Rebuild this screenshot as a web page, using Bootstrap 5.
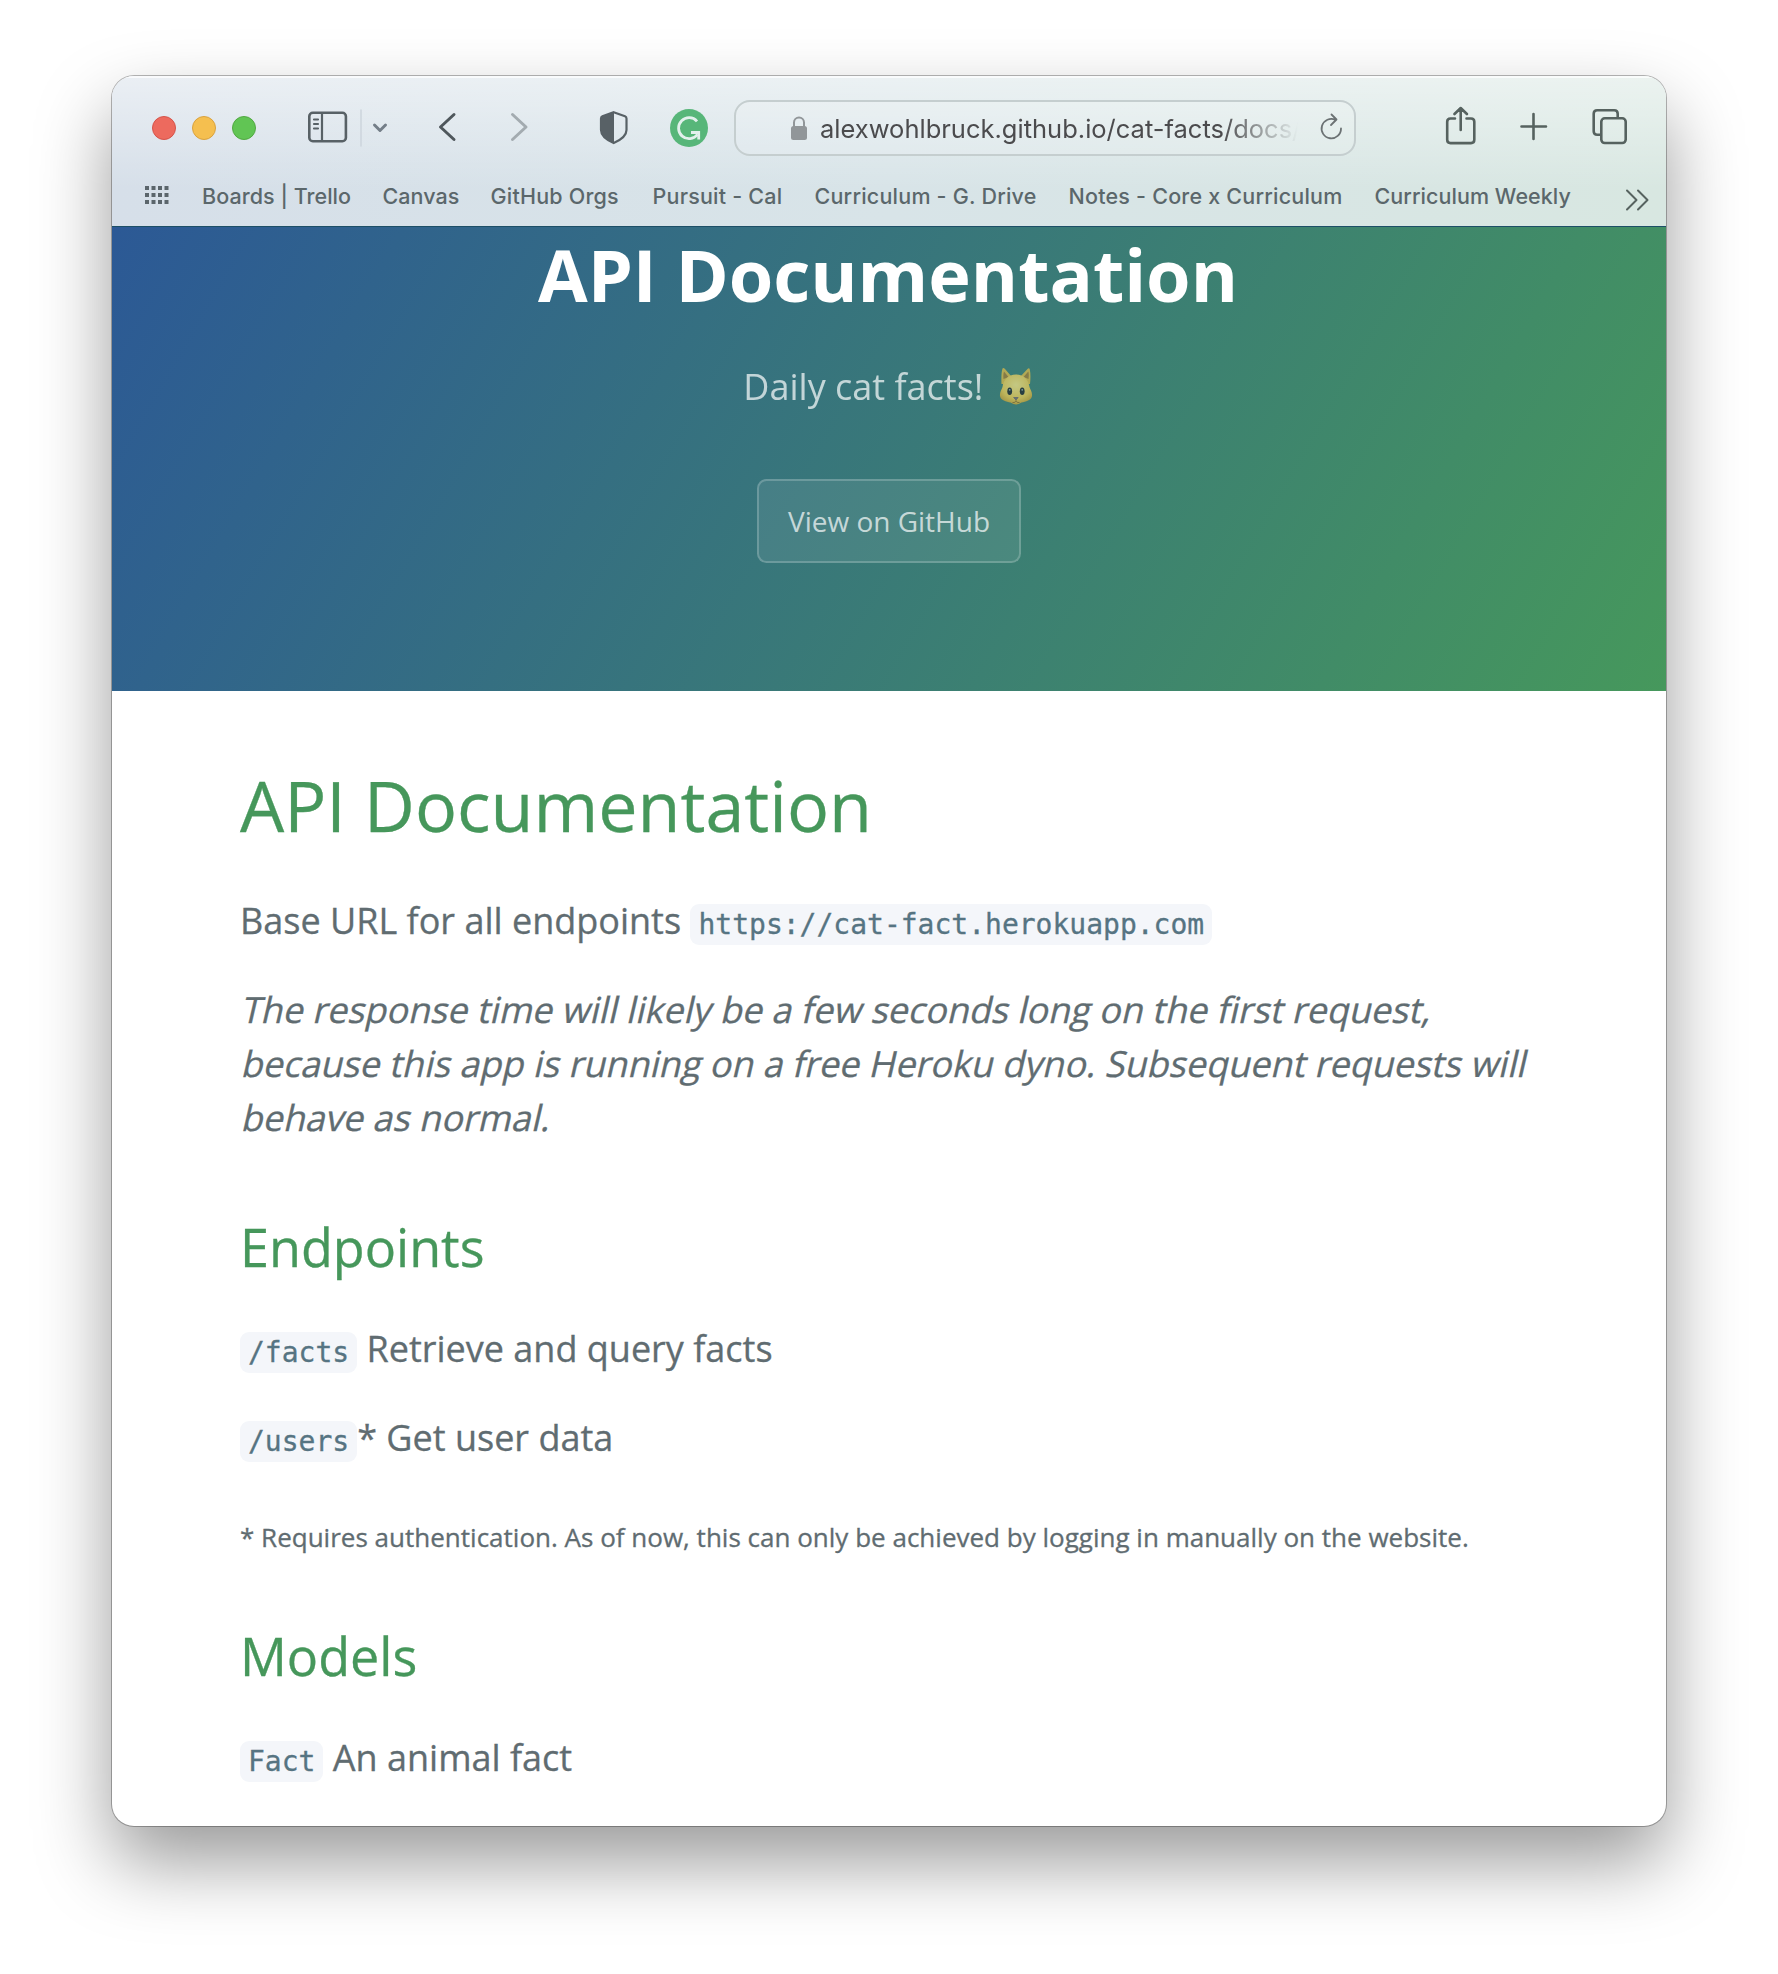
<!DOCTYPE html>
<html lang="en">
<head>
<meta charset="utf-8">
<title>API Documentation</title>
<link href="https://cdn.jsdelivr.net/npm/bootstrap@5.3.0/dist/css/bootstrap.min.css" rel="stylesheet">
<style>
body{font-family:"Open Sans",sans-serif;background:#fff;color:#606c71;min-height:100vh;padding:76px 112px 0}
.app-window{width:1554px;height:1750px;border-radius:22px;background:#fff;box-shadow:0 0 0 1px rgba(0,0,0,.28),0 36px 76px rgba(0,0,0,.4)}
.app-inner{border-radius:22px}
.chrome{height:151px;padding-top:24px;font-family:Inter,"Liberation Sans",sans-serif;color:#5b676b;background:linear-gradient(180deg,rgba(255,255,255,.5),rgba(255,255,255,0) 75%),linear-gradient(90deg,#d6dfe9,#d8e4e8 50%,#d8e7e1);border-bottom:1px solid #1d4f67;box-shadow:inset 0 2px rgba(255,255,255,.7)}
.toolbar-row{height:56px}
.toolbar-row svg{display:block;flex:none}
.light{width:24px;height:24px;border-radius:50%;margin-right:16px;flex:none}
.light-r{background:#ed6a5e;border:1px solid #d5544a;margin-left:40px}
.light-y{background:#f5bf4f;border:1px solid #d9a23f}
.light-g{background:#61c554;border:1px solid #52a842}
.ico-sidebar{margin-left:32px}
.ico-nav{margin-left:34px}
.ico-ext{margin-left:56px}
.ico-lock{margin-left:52px}
.ico-reload{margin-left:18px}
.ico-actions{margin-left:84px}
.ico-grid{margin-left:32px;margin-right:32px}
.address{width:622px;height:56px;margin-left:18px;border:2px solid #c5cecf;border-radius:16px;background:rgba(255,255,255,.12)}
.address-text{font-size:25.5px;line-height:36px;padding-top:2px;color:#4b4b4d;width:478px;margin-left:8px;white-space:nowrap;overflow:hidden;-webkit-mask-image:linear-gradient(90deg,#000 84%,transparent 100%);mask-image:linear-gradient(90deg,#000 84%,transparent 100%)}
.bookmarks{height:40px;margin-top:20px;font-size:21.5px;font-weight:500;letter-spacing:.21px;white-space:nowrap}
.bookmarks span{flex:none}
.bookmarks .tight{letter-spacing:.05px}
.hero{height:464px;padding-top:2px;background:linear-gradient(120deg,#2b5797,#46985c) bottom/100% 558px no-repeat}
.hero h1{font-size:72px;font-weight:700;line-height:90px;margin:0 0 41px;padding-right:2px}
.tagline{font-size:36px;line-height:54px;margin:0 0 65px;opacity:.7}
.tagline svg{vertical-align:-5px;margin-left:5px}
.hero-btn{font-size:28px;line-height:43px;padding:18.5px 28.8px;border:2px solid rgba(255,255,255,.2);border-radius:9.6px;background:rgba(255,255,255,.08);color:rgba(255,255,255,.7)}
.doc{padding:72.2px 128px 0;font-size:36px;line-height:54px;height:1135px}
.doc p{margin:0 0 35.2px;-webkit-text-stroke:.3px currentColor}
.doc h1,.doc h2{color:#46975b;font-weight:400;-webkit-text-stroke:.3px currentColor}
.doc h1{font-size:70px;line-height:84px;margin:0 0 46.5px}
.doc h2{font-size:52.1px;line-height:64px;margin:0 0 43px}
.doc code{font-family:"DejaVu Sans Mono",monospace;font-size:28px;line-height:1;color:#567482;background:#f4f6fa;padding:4px 8px;border-radius:9px}
.doc .note{font-size:26.02px;line-height:42px;margin:50.5px 0 66px}
.doc .sec{margin-top:70px}
/* slanted upright face, pivoting on the baseline */
.slant span{display:block;white-space:nowrap;transform:skewX(-13deg);transform-origin:0 41px}
</style>
</head>
<body>
<div class="app-window"><div class="app-inner overflow-hidden h-100">
<header class="chrome">
  <div class="toolbar-row d-flex align-items-center">
    <i class="light light-r"></i><i class="light light-y"></i><i class="light light-g"></i>
    <svg class="ico-sidebar" width="92" height="56" viewBox="304 100 92 56" fill="none" stroke="#586166" stroke-width="2.6" stroke-linecap="round" stroke-linejoin="round"><rect x="309.300" y="112.800" width="36.600" height="28.400" rx="3.500"/><path d="M322 113v28M314 119.500h4M314 124h4M314 128.500h4" stroke-width="2.200"/><path d="M361 110v36" stroke="#cdd4dc" stroke-width="1.500"/><path d="M374.500 125l5.500 5.500 5.500-5.500" stroke="#747e88" stroke-width="3"/></svg>
    <svg class="ico-nav" width="110" height="56" viewBox="430 100 110 56" fill="none" stroke-width="3" stroke-linecap="round" stroke-linejoin="round"><path d="M454 114.500L440.500 127 454 139.500" stroke="#4f575c"/><path d="M512.500 114.500L526 127l-13.500 12.500" stroke="#a3abb0"/></svg>
    <svg class="ico-ext" width="120" height="56" viewBox="596 100 120 56"><path d="M613.700 112.200L625 116.200Q626.500 116.800 626.500 118.500V130Q626.500 137.500 613.700 143 601 137.500 601 130v-11.500Q601 116.800 602.400 116.200z" fill="none" stroke="#586166" stroke-width="2.200"/><path d="M614 112v31Q601 137.500 601 130v-11.500Q601 116.800 602.400 116.200z" fill="#586166"/><circle cx="689" cy="128" r="19" fill="#57b679"/><path d="M697 121.300A10.500 10.500 0 1 0 697.500 134.500" fill="none" stroke="#e2f0ec" stroke-width="2.800"/><path d="M691 132.500h7.700v7" fill="none" stroke="#e2f0ec" stroke-width="2.800"/></svg>
    <div class="address d-flex align-items-center">
      <svg class="ico-lock" width="24" height="52" viewBox="788 102 24 52"><rect x="791" y="126" width="16" height="14" rx="2.500" fill="#919699"/><path d="M794 127v-4.500a5 5 0 0 1 10 0v4.500" fill="none" stroke="#919699" stroke-width="2"/></svg>
      <div class="address-text">alexwohlbruck.github.io/cat-facts/docs/</div>
      <svg class="ico-reload" width="30" height="52" viewBox="1316 102 30 52" fill="none" stroke="#6c7274" stroke-width="1.800" stroke-linecap="round" stroke-linejoin="round"><path d="M1341 128.500A9.700 9.700 0 1 1 1335.500 119.900M1331.500 114.500l5 5-5.500 5.500"/></svg>
    </div>
    <svg class="ico-actions" width="200" height="56" viewBox="1440 100 200 56" fill="none" stroke="#56625f" stroke-width="2.600" stroke-linecap="round" stroke-linejoin="round"><path d="M1455 118.500h-4.500q-3.300 0-3.300 3.300v18q0 3.300 3.300 3.300h20.500q3.300 0 3.300-3.300v-18q0-3.300-3.300-3.300h-4.500M1460.700 130v-21M1454.500 114l6.200-6 6.200 6M1521.500 126.500h24.500M1533.500 114v25"/><rect x="1601.300" y="118.300" width="24.400" height="24.700" rx="3.500"/><path d="M1600 134.800h-2.800q-3.500 0-3.500-3.500v-17.500q0-3.500 3.500-3.500h17q3.500 0 3.500 3.500v3"/></svg>
  </div>
  <div class="bookmarks d-flex align-items-center">
    <svg class="ico-grid" width="26" height="40" viewBox="144 176 26 40" fill="none" stroke="#5b656b" stroke-width="4" stroke-dasharray="4 2.500"><path d="M145 188h24M145 195h24M145 202h24"/></svg>
    <span class="tight" style="width:180.500px">Boards | Trello</span><span class="tight" style="width:108px">Canvas</span><span style="width:162px">GitHub Orgs</span><span style="width:162px">Pursuit - Cal</span><span style="width:254px">Curriculum - G. Drive</span><span style="width:306px">Notes - Core x Curriculum</span><span class="tight" style="width:249px">Curriculum Weekly</span>
    <svg width="28" height="40" viewBox="1624 176 28 40" fill="none" stroke="#56625f" stroke-width="2" stroke-linecap="round" stroke-linejoin="round"><path d="M1627 190.500l9.500 9.500-9.500 9.500M1638 190.500l9.500 9.500-9.500 9.500"/></svg>
  </div>
</header>
<section class="hero text-center text-white">
  <h1>API Documentation</h1>
  <p class="tagline">Daily cat facts! <svg width="37" height="38" viewBox="0 0 37 38"><defs><radialGradient id="fur" cx=".5" cy=".35" r=".7"><stop offset="0" stop-color="#ffe98a"/><stop offset=".65" stop-color="#f5cd50"/><stop offset="1" stop-color="#c99a2c"/></radialGradient></defs><path d="M3.500 17Q3 6 4.500 1.500 5.500.500 7 2L13.500 9.500 22.500 9.500 29.500 2Q31 .500 31.700 2 33 8 32 17z" fill="#e5bd47"/><path d="M5.500 12Q5 7 6 4.500L10.500 10zM30.500 12Q31.200 7 30.300 4.500L25.500 10z" fill="#a67c35"/><path d="M18 7.500C26 7.500 30.500 13 31.500 20 32.500 23 34.500 25.500 34 29 33.500 33 27.500 35 23.500 35.500Q20.500 37.500 18 37.500 15.500 37.500 12.500 35.500C8.500 35 2.500 33 2 29 1.500 25.500 3.500 23 4.500 20 5.500 13 10 7.500 18 7.500z" fill="url(#fur)"/><ellipse cx="11.700" cy="24.300" rx="2.400" ry="3.800" fill="#22252b"/><ellipse cx="24.200" cy="24.300" rx="2.400" ry="3.800" fill="#22252b"/><circle cx="11.700" cy="22.800" r=".9" fill="#9aa"/><circle cx="24.200" cy="22.800" r=".9" fill="#9aa"/><path d="M15.700 30.500h4.400L18 33z" fill="#7b6a6a" stroke="#7b6a6a" stroke-linejoin="round"/><path d="M14.500 35.500Q17 36.500 18 33.500 19 36.500 21.500 35.500" fill="none" stroke="#96702a"/></svg></p>
  <a class="btn hero-btn">View on GitHub</a>
</section>
<main class="doc">
  <h1>API Documentation</h1>
  <p>Base URL for all endpoints <code>https://cat-fact.herokuapp.com</code></p>
  <p class="slant"><span>The response time will likely be a few seconds long on the first request,</span> <span>because this app is running on a free Heroku dyno. Subsequent requests will</span> <span>behave as normal.</span></p>
  <h2 class="sec">Endpoints</h2>
  <p><code>/facts</code> Retrieve and query facts</p>
  <p><code>/users</code>* Get user data</p>
  <p class="note">* Requires authentication. As of now, this can only be achieved by logging in manually on the website.</p>
  <h2>Models</h2>
  <p><code>Fact</code> An animal fact</p>
</main>
</div></div>
<script src="https://cdn.jsdelivr.net/npm/bootstrap@5.3.0/dist/js/bootstrap.bundle.min.js"></script>
</body>
</html>
